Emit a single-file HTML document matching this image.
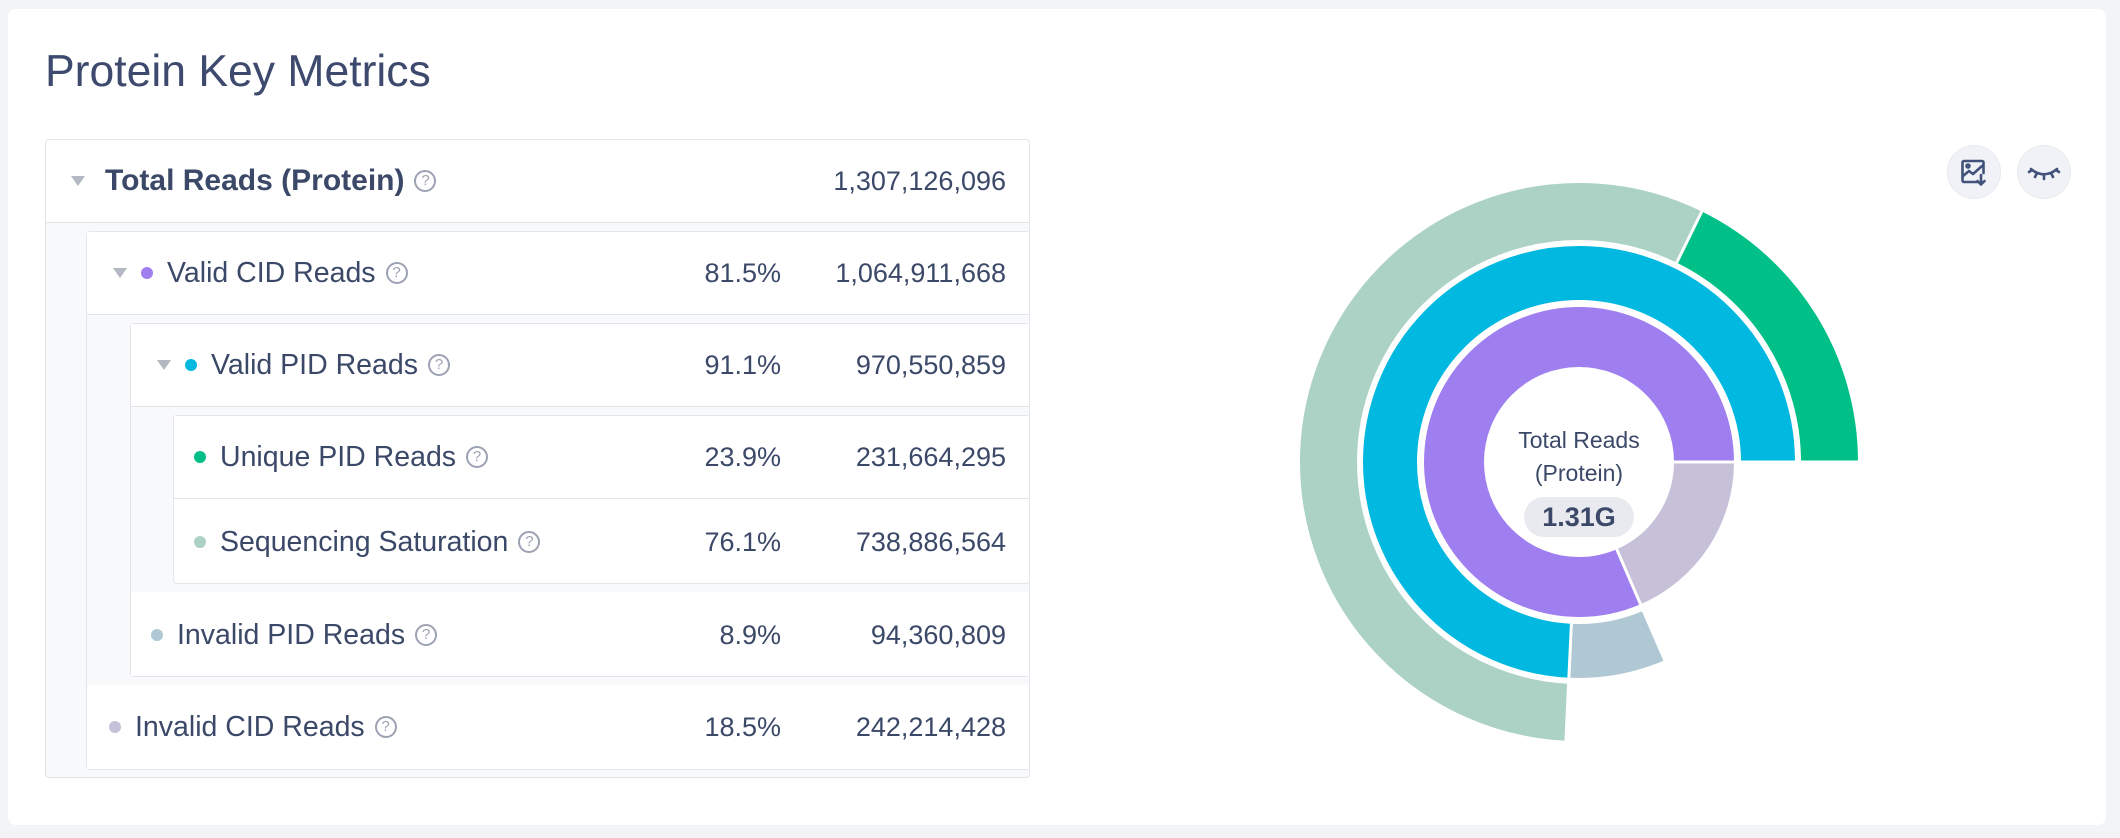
<!DOCTYPE html>
<html><head><meta charset="utf-8"><style>
*{box-sizing:border-box;margin:0;padding:0}
body{width:2120px;height:838px;background:#f3f4f6;font-family:"Liberation Sans",sans-serif;color:#3b4868;position:relative;overflow:hidden}
.card{position:absolute;left:8px;top:9px;width:2098px;height:816px;background:#fff;border-radius:8px}
h1{position:absolute;left:45px;top:47px;font-size:44.5px;font-weight:400;color:#3d4a6e}
.box{position:absolute;border:1px solid #e3e5ea;border-radius:4px;background:#f8f9fa}
.row{position:absolute;background:#fff;border-bottom:1px solid #e3e5ea}
.t{position:absolute;font-size:28.5px;line-height:30px;white-space:nowrap;display:flex;align-items:center}
.r{position:absolute;font-size:27px;line-height:30px;text-align:right;white-space:nowrap}
.dot{display:inline-block;width:12px;height:12px;border-radius:50%;margin-right:14px}
.tri{display:inline-block;width:0;height:0;border-left:7px solid transparent;border-right:7px solid transparent;border-top:10px solid #b4b8c2;margin-right:20px}
.q{display:inline-block;width:22px;height:22px;border:2px solid #9ca2b2;border-radius:50%;font-size:15px;line-height:18px;text-align:center;color:#9ca2b2;margin-left:10px;font-weight:400}
.btn{position:absolute;width:54px;height:54px;border-radius:50%;background:#f0f2f8;border:1px solid #e8eaf0}
</style></head><body>
<div class="card"></div>
<h1>Protein Key Metrics</h1>

<div class="box" style="left:45px;top:139px;width:985px;height:639px"></div>
<div class="row" style="left:46px;top:140px;width:983px;height:83px;border-radius:4px 4px 0 0"></div>
<div class="box" style="left:86px;top:231px;width:944px;height:539px"></div>
<div class="row" style="left:87px;top:232px;width:942px;height:83px"></div>
<div class="row" style="left:87px;top:685px;width:942px;height:84px;border-bottom:none"></div>
<div class="box" style="left:130px;top:323px;width:900px;height:354px"></div>
<div class="row" style="left:131px;top:324px;width:898px;height:83px"></div>
<div class="row" style="left:131px;top:592px;width:898px;height:84px;border-bottom:none"></div>
<div class="box" style="left:173px;top:415px;width:857px;height:169px;background:#fff"></div>
<div class="row" style="left:174px;top:416px;width:855px;height:83px"></div>

<div class="t" style="left:71px;top:166px;font-weight:700;font-size:30px"><span class="tri"></span>Total Reads (Protein)<span class="q">?</span></div>
<div class="r" style="right:1114px;top:166px">1,307,126,096</div>

<div class="t" style="left:113px;top:258px"><span class="tri" style="margin-right:14px"></span><span class="dot" style="background:#9f7fef"></span>Valid CID Reads<span class="q">?</span></div>
<div class="r" style="right:1339px;top:258px">81.5%</div><div class="r" style="right:1114px;top:258px">1,064,911,668</div>

<div class="t" style="left:157px;top:350px"><span class="tri" style="margin-right:14px"></span><span class="dot" style="background:#00b8e0"></span>Valid PID Reads<span class="q">?</span></div>
<div class="r" style="right:1339px;top:350px">91.1%</div><div class="r" style="right:1114px;top:350px">970,550,859</div>

<div class="t" style="left:194px;top:442px"><span class="dot" style="background:#00c087"></span>Unique PID Reads<span class="q">?</span></div>
<div class="r" style="right:1339px;top:442px">23.9%</div><div class="r" style="right:1114px;top:442px">231,664,295</div>

<div class="t" style="left:194px;top:527px"><span class="dot" style="background:#acd1c5"></span>Sequencing Saturation<span class="q">?</span></div>
<div class="r" style="right:1339px;top:527px">76.1%</div><div class="r" style="right:1114px;top:527px">738,886,564</div>

<div class="t" style="left:151px;top:620px"><span class="dot" style="background:#b0c8d4"></span>Invalid PID Reads<span class="q">?</span></div>
<div class="r" style="right:1339px;top:620px">8.9%</div><div class="r" style="right:1114px;top:620px">94,360,809</div>

<div class="t" style="left:109px;top:712px"><span class="dot" style="background:#c6c1d8"></span>Invalid CID Reads<span class="q">?</span></div>
<div class="r" style="right:1339px;top:712px">18.5%</div><div class="r" style="right:1114px;top:712px">242,214,428</div>

<svg style="position:absolute;left:0;top:0" width="2120" height="838">
<g fill="none">
<circle cx="1579" cy="462" r="125" stroke="#c6c1d8" stroke-width="60" pathLength="360" stroke-dasharray="66.6 360" stroke-dashoffset="0"/>
<circle cx="1579" cy="462" r="125" stroke="#9f7fef" stroke-width="60" pathLength="360" stroke-dasharray="293.4 360" stroke-dashoffset="-66.6"/>
<circle cx="1579" cy="462" r="189" stroke="#b0c8d4" stroke-width="54" pathLength="360" stroke-dasharray="26.1 360" stroke-dashoffset="-66.6"/>
<circle cx="1579" cy="462" r="189" stroke="#00b8e0" stroke-width="54" pathLength="360" stroke-dasharray="267.3 360" stroke-dashoffset="-92.7"/>
<circle cx="1579" cy="462" r="250.5" stroke="#acd1c5" stroke-width="57" pathLength="360" stroke-dasharray="203.4 360" stroke-dashoffset="-92.7"/>
<circle cx="1579" cy="462" r="250.5" stroke="#00c087" stroke-width="57" pathLength="360" stroke-dasharray="63.9 360" stroke-dashoffset="-296.1"/>
</g>
<g stroke="#fff" stroke-width="3">
<line x1="1672" y1="462" x2="1860" y2="462"/>
<line x1="1616.7" y1="549.2" x2="1664.8" y2="660.3"/>
<line x1="1571.4" y1="623.8" x2="1565.9" y2="740.7"/>
<line x1="1676.7" y1="262.6" x2="1701.8" y2="211.5"/>
</g>
<text x="1579" y="448" text-anchor="middle" font-family="Liberation Sans" font-size="23" fill="#3b4868">Total Reads</text>
<text x="1579" y="481" text-anchor="middle" font-family="Liberation Sans" font-size="23" fill="#3b4868">(Protein)</text>
<rect x="1524" y="497" width="110" height="40" rx="20" fill="#e8eaef"/>
<text x="1579" y="526" text-anchor="middle" font-family="Liberation Sans" font-size="27" font-weight="700" fill="#3b4868">1.31G</text>
</svg>

<div class="btn" style="left:1947px;top:145px"></div>
<div class="btn" style="left:2017px;top:145px"></div>
<svg style="position:absolute;left:1947px;top:145px" width="54" height="54" viewBox="0 0 54 54" fill="none" stroke="#42527a" stroke-width="2.6" stroke-linecap="round" stroke-linejoin="round">
<path d="M30 37H17a1.5 1.5 0 0 1-1.5-1.5v-18A1.5 1.5 0 0 1 17 16h18a1.5 1.5 0 0 1 1.5 1.5V28"/>
<path d="M16 31l6-5 4 3 9-8"/><circle cx="21" cy="21" r="1.5"/>
<path d="M34 30v9M30.5 36l3.5 3.5 3.5-3.5"/>
</svg>
<svg style="position:absolute;left:2017px;top:145px" width="54" height="54" viewBox="0 0 54 54" fill="none" stroke="#42527a" stroke-width="2.6" stroke-linecap="round">
<path d="M14 24c8 7 18 7 26 0"/><path d="M20 28l-2 4M27 30v4M34 28l2 4M15 25l-3 2M39 25l3 2"/>
</svg>
</body></html>
